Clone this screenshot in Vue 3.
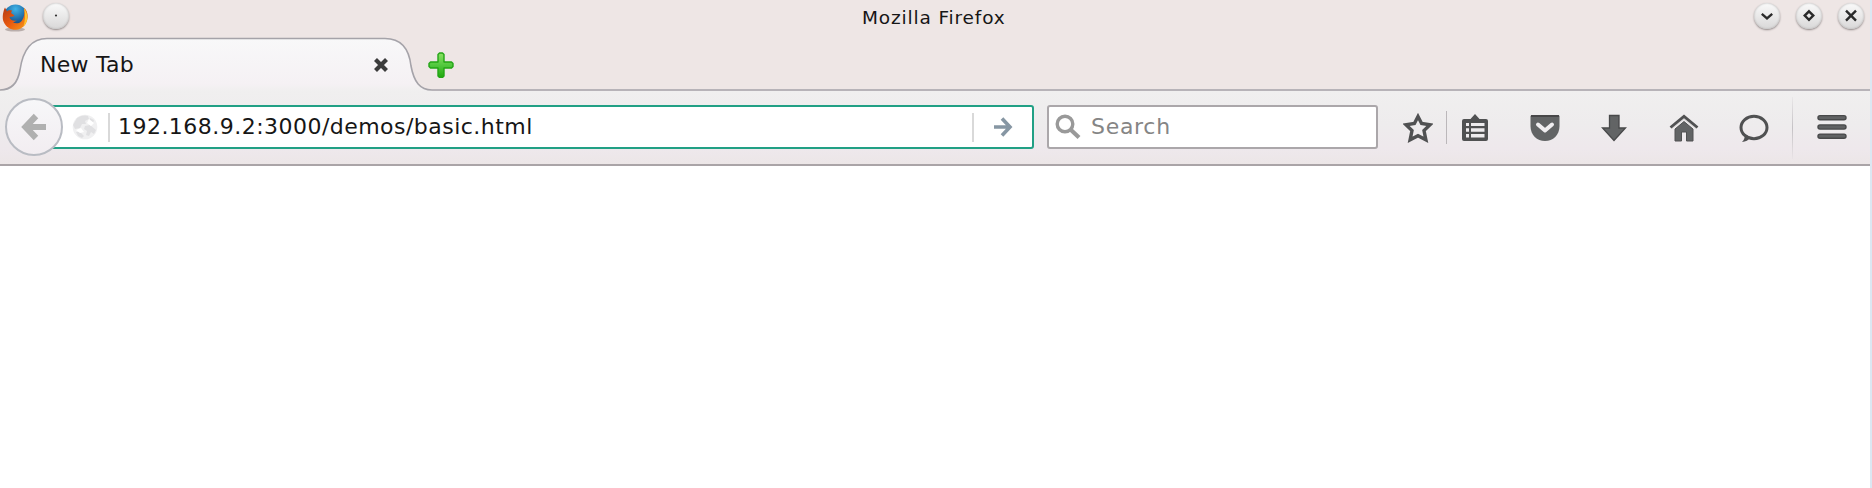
<script setup>
const address = '192.168.9.2:3000/demos/basic.html'
</script>

<template>
  <div class="window">
    <header class="titlebar">
      <svg class="fox" width="26" height="28" viewBox="2 1.500 26 28">
        <defs>
          <radialGradient id="globe" cx=".5" cy=".2" r=".8"><stop offset="0" stop-color="#3fb4e8" /><stop offset=".6" stop-color="#1f659f" /><stop offset="1" stop-color="#123a6c" /></radialGradient>
          <linearGradient id="fur" x1="0" y1="0" x2="1" y2="1"><stop offset="0" stop-color="#b33a12" /><stop offset=".5" stop-color="#e9590f" /><stop offset="1" stop-color="#f6a01a" /></linearGradient>
        </defs>
        <ellipse cx="15" cy="28" rx="10" ry="2" fill="#b9aeac" />
        <circle cx="15.500" cy="14.500" r="11.600" fill="url(#globe)" />
        <path d="M5 6 C3 10 2 16 3.500 20 C6 26 11 28.500 16 28.300 C22 28 27 23 27.700 16 C28 11 26 8 24 6.500 C25 12 24 16 22 19 C20 22 16 22.500 13 21 L17 19 C13 20 10 18 9.500 15.500 C11 15 13 15.500 14.500 14 L11 11.500 L12 9 C9 8.500 8 9 7 10 Z" fill="url(#fur)" />
        <path d="M24 6.500 C28.500 12 28.500 20 23.500 25 C25 20 25.500 14 24 6.500Z" fill="#ffc42d" />
      </svg>
      <span class="knob first"><svg width="26" height="26" viewBox="0 0 26 26"><circle cx="13" cy="12.500" r="1.100" fill="#333" /></svg></span>
      <h1>Mozilla Firefox</h1>
      <div class="controls">
        <span class="knob"><svg width="26" height="26" viewBox="0 0 26 26"><path d="M7.800 10.800 L13 15.300 L18.200 10.800" /></svg></span>
        <span class="knob"><svg width="26" height="26" viewBox="0 0 26 26"><path d="M13 8.300 L17.300 12.600 L13 16.900 L8.700 12.600Z" /></svg></span>
        <span class="knob"><svg width="26" height="26" viewBox="0 0 26 26"><path d="M8 7.600 L18 17.600 M18 7.600 L8 17.600" /></svg></span>
      </div>
    </header>

    <div class="tabs">
      <svg class="tabshape" width="1872" height="54" viewBox="0 0 1872 54">
        <defs><linearGradient id="tabfill" x1="0" y1="0" x2="0" y2="1"><stop offset="0" stop-color="#f8f8f9" /><stop offset=".86" stop-color="#f5f1f4" /><stop offset="1" stop-color="#f0efef" /></linearGradient></defs>
        <path d="M0 54 C12 53 18 45 20 33 C23 12 32 1.500 47 1.500 L385 1.500 C401 1.500 409 11 411 29 C414 45 420 53 432 53 V54 H0Z" fill="url(#tabfill)" />
        <path d="M0 53 C12 53 18 45 20 33 C23 12 32 1.500 47 1.500 L385 1.500 C401 1.500 409 11 411 29 C414 45 420 53 432 53 H1872" fill="none" stroke="#a5a3a9" stroke-width="1.600" />
      </svg>
      <span class="tablabel">New Tab</span>
      <svg class="close" width="16" height="16" viewBox="0 0 16 16"><path d="M2.500 2.500 L13.500 13.500 M13.500 2.500 L2.500 13.500" stroke="#3b3b3b" stroke-width="4.200" /></svg>
      <svg class="plus" width="26" height="26" viewBox="0 0 26 26">
        <defs><linearGradient id="green" x1="0" y1="0" x2="0" y2="1"><stop offset="0" stop-color="#8be263" /><stop offset=".5" stop-color="#52c83e" /><stop offset="1" stop-color="#20a80c" /></linearGradient></defs>
        <path d="M11.500 1 H14.500 L16 2.500 V10 H23.500 L25 11.500 V14.500 L23.500 16 H16 V24 L14.500 25.500 H11.500 L10 24 V16 H2.500 L1 14.500 V11.500 L2.500 10 H10 V2.500Z" fill="url(#green)" stroke="#23a516" stroke-width="1.400" stroke-linejoin="round" />
      </svg>
    </div>

    <nav class="toolbar">
      <button class="back" aria-label="Back">
        <svg width="28" height="30" viewBox="0 0 28 30"><path d="M16 4 L5.500 15 L16 26 M6 15 H26" fill="none" stroke="#b0b0b0" stroke-width="6.200" /></svg>
      </button>
      <div class="address">
        <svg class="world" width="26" height="26" viewBox="0 0 26 26">
          <circle cx="13" cy="13" r="12.300" fill="#f0f0f1" />
          <path d="M5 4 C9 1 14 1 16 2 L17 5 L13 7 L14 10 L10 10 L8 14 L3 15 L1 11Z M18 4 L22 6 L21 9 L17 8Z M13 12 L18 11 L24 16 L22 20 L19 18 L17 22 L14 21 L15 17 L12 15Z M4 18 L8 18 L12 22 L10 24 L6 22Z" fill="#e0e0e2" />
          <path d="M17 5 L22 9 L19 12 L15 9Z M4 16 L9 14 L12 18 L8 19Z" fill="#fff" />
        </svg>
        <i class="rule idrule"></i>
        <span class="url">{{ address }}</span>
        <i class="rule gorule"></i>
        <svg class="go" width="20" height="22" viewBox="0 0 20 22"><path d="M1 11 H17 M9 2.500 L17 11 L9 19.500" fill="none" stroke="#8696a3" stroke-width="3.600" /></svg>
      </div>
      <div class="search">
        <svg width="26" height="26" viewBox="0 0 26 26"><circle cx="10" cy="10" r="7.800" fill="none" stroke="#999" stroke-width="3.400" /><path d="M15.500 15.500 L24 23.500" stroke="#999" stroke-width="4.200" /></svg>
        <span>Search</span>
      </div>
      <div class="tools">
        <svg width="30" height="30" viewBox="0 0 30 30"><path d="M15 3.500 L18.600 10.500 L27 11.800 L21 17.500 L22.900 26.800 L15 22.700 L7.100 26.800 L9 17.500 L3 11.800 L11.400 10.500Z" fill="none" stroke="#505152" stroke-width="3.400" /></svg>
        <i class="starrule"></i>
        <svg width="26" height="30" viewBox="0 0 26 30"><path d="M2 6 H8.500 L13 1 L17.500 6 H24 Q26 6 26 8 V26 Q26 28 24 28 H2 Q0 28 0 26 V8 Q0 6 2 6Z" fill="#505152" /><path d="M4 10 H7 V13 H4Z M9 10 H22.500 V13 H9Z M4 15.300 H7 V18.700 H4Z M9 15.300 H22.500 V18.700 H9Z M4 21 H7 V24.500 H4Z M9 21 H22.500 V24.500 H9Z" fill="#eeecee" /></svg>
        <svg class="pocket" width="30" height="30" viewBox="0 0 30 30"><path d="M2 2 H28 Q29.500 2 29.500 3.500 V13 C29.500 22 23 28 15 28 C7 28 .5 22 .5 13 V3.500 Q.5 2 2 2Z" fill="#626465" /><path d="M1 3 H29" stroke="#444546" stroke-width="1.800" /><path d="M8 11.500 L15 17.500 L22 11.500" fill="none" stroke="#f0eef0" stroke-width="4" stroke-linecap="round" stroke-linejoin="round" /></svg>
        <svg class="down" width="26" height="30" viewBox="0 0 26 30"><path d="M8.500 2.500 H18 V15 H24.500 L13 27.500 L1.500 15 H8.500Z" fill="#626465" stroke="#48494a" stroke-width="1.300" /></svg>
        <svg class="home" width="30" height="30" viewBox="0 0 30 30"><path d="M6 16 L15 8.500 L24 16 V28 H17.500 V19 H12.500 V28 H6Z" fill="#626465" stroke="#505152" stroke-width="1" /><path d="M3 15.500 L15 6 L27 15.500" fill="none" stroke="#dcdada" stroke-width="1.200" /><path d="M1.500 14.500 L15 3.300 L28.500 14.500" fill="none" stroke="#505152" stroke-width="2.800" /></svg>
        <svg class="chat" width="30" height="30" viewBox="0 0 30 30"><path d="M6 21 Q6 26 3 29 Q8.500 28.500 11.500 24.500Z" fill="#505152" /><ellipse cx="15" cy="14.500" rx="13" ry="11.300" fill="none" stroke="#505152" stroke-width="3" /></svg>
        <i class="menurule"></i>
        <svg class="menu" width="30" height="30" viewBox="0 0 30 30"><path d="M3 4.700 H27 M3 14 H27 M3 23.200 H27" stroke="#48494a" stroke-width="5.400" stroke-linecap="round" /><path d="M3 4.700 H27 M3 14 H27 M3 23.200 H27" stroke="#606263" stroke-width="2.800" stroke-linecap="round" /></svg>
      </div>
    </nav>
    <main></main>
  </div>
</template>

<style>
body { margin: 0; background: #fff; }
</style>
<style scoped>
.window { box-sizing: border-box; width: 1872px; height: 488px; border-right: 2px solid #dbe7f2; font-family: "DejaVu Sans", sans-serif; display: flex; flex-direction: column; overflow: hidden; background: #fff; color: #161616; }
svg { display: block; flex: none; }
.titlebar { height: 37px; flex: none; background: #eee6e5; display: flex; align-items: flex-start; }
.fox { width: 26px; height: 28px; margin: 3px 0 0 2px; overflow: visible; }
.knob { width: 26px; height: 26px; border-radius: 50%; margin-top: 3px; background: linear-gradient(#fafafa, #d9d8d8); box-shadow: 0 1px 2px #8d8585, inset 0 0 2px #aaa; }
.knob path { fill: none; stroke: #2a2a2a; stroke-width: 2.400; }
.knob.first { margin-left: 15px; }
h1 { margin: 6px 0 0 793px; width: 170px; font-size: 18.500px; letter-spacing: .85px; line-height: 24px; font-weight: 400; white-space: nowrap; }
.controls { display: flex; gap: 16px; margin-left: auto; margin-right: 6px; }
.tabs { height: 54px; flex: none; display: flex; align-items: flex-start; position: relative; background: #eee6e5; }
.tabshape { position: absolute; left: 0; top: 0; }
.tablabel { position: relative; margin: 15px 0 0 40px; width: 333px; font-size: 22px; letter-spacing: .25px; line-height: 26px; white-space: nowrap; }
.close { position: relative; margin-top: 20px; }
.plus { position: relative; margin: 15px 0 0 39px; }
.toolbar { box-sizing: border-box; height: 75px; flex: none; display: flex; align-items: flex-start; background: linear-gradient(#f0efef, #eeeced 45%, #eee8ec 80%, #ece6e7); border-bottom: 2px solid #aaa4a7; }
.back { z-index: 1; box-sizing: border-box; width: 58px; height: 58px; flex: none; margin: 7px 0 0 5px; padding: 0 1px 0 0; border: 2px solid #b9bcc3; border-radius: 50%; background: linear-gradient(#f7f7f9, #f2edf1); display: flex; align-items: center; justify-content: center; }
.address, .search { box-sizing: border-box; height: 44px; margin-top: 14px; background: #fff; display: flex; align-items: center; flex: none; border-radius: 3px; }
.address { width: 985px; margin-left: -14px; border: 2px solid #21a085; }
.world { margin-left: 21px; }
.rule { width: 2px; height: 29px; background: #d9d9d9; flex: none; }
.idrule { margin-left: 10px; }
.url { margin-left: 8px; width: 854px; font-size: 22px; letter-spacing: .47px; line-height: 28px; white-space: nowrap; }
.go { margin-left: 19px; }
.search { width: 331px; margin-left: 13px; border: 2px solid #aba7aa; color: #858585; font-size: 22px; }
.search svg { margin-left: 6px; }
.search span { margin-left: 10px; letter-spacing: .7px; line-height: 28px; }
.tools { display: flex; align-items: center; height: 73px; margin-left: 25px; }
.starrule { width: 1px; height: 33px; background: #bbb7ba; margin: 0 14px 0 13px; }
.starrule + svg { margin-left: 1px; }
.pocket { margin-left: 42px; }
.down { margin-left: 41px; }
.home { margin-left: 42px; }
.chat { margin-left: 40px; }
.menurule { width: 1px; height: 62px; margin-left: 23px; background: linear-gradient(#e9e7e8, #c5c2c5, #e9e3e6); }
.menu { margin-left: 24px; }
main { flex: 1; background: #fff; }
</style>
